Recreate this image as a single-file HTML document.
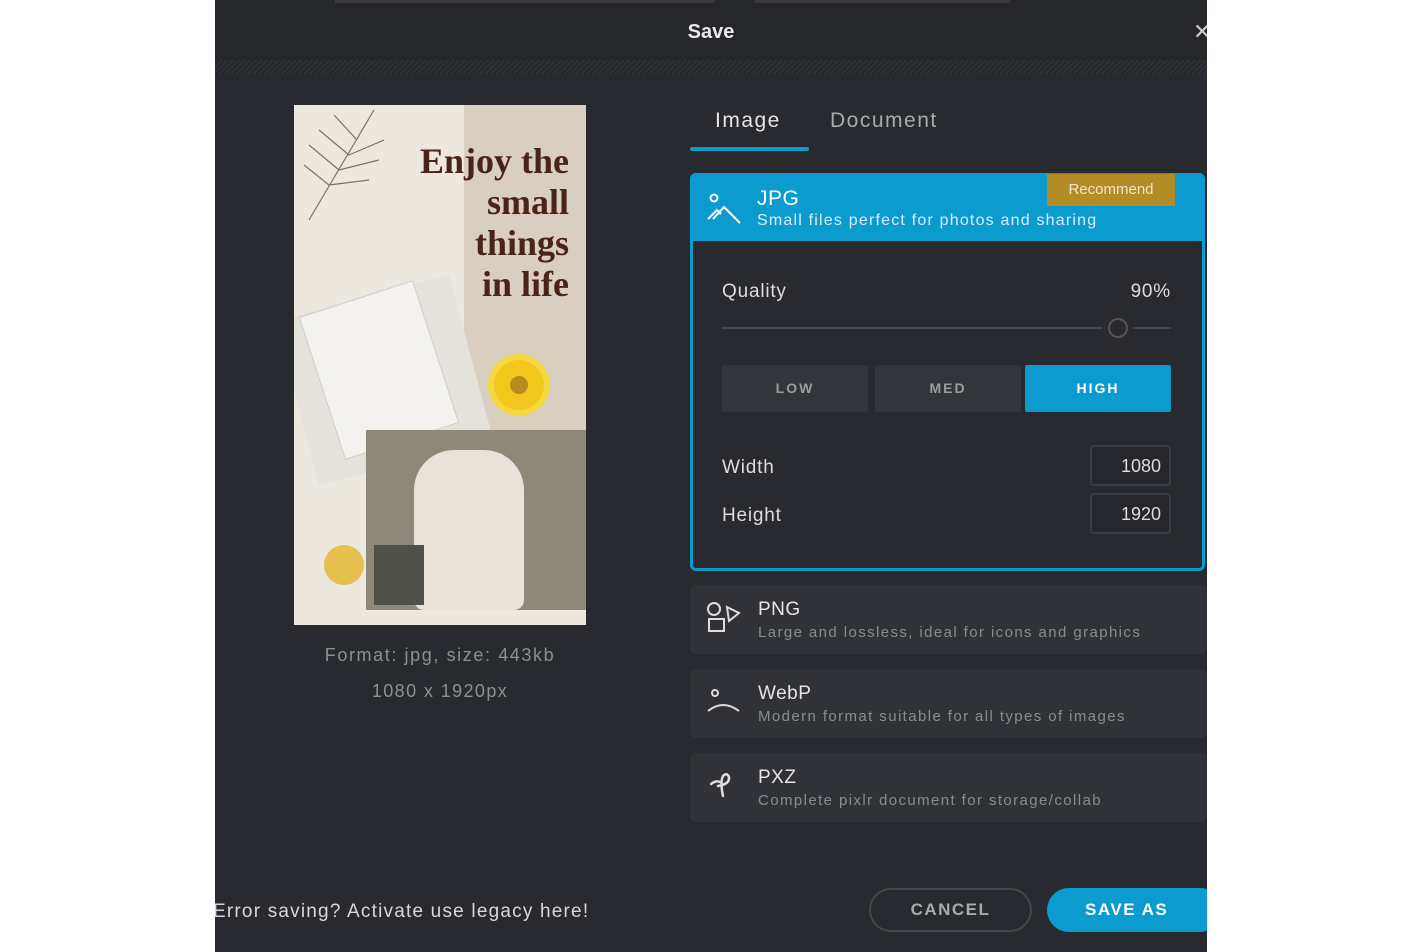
<!DOCTYPE html>
<html><head><meta charset="utf-8"><style>
*{margin:0;padding:0;box-sizing:border-box}
body{width:1428px;height:952px;background:#fff;position:relative;overflow:hidden;font-family:"Liberation Sans",sans-serif;color:#ddd}
.dlg{position:absolute;left:215px;top:0;width:992px;height:952px;background:#282a2f;overflow:hidden}
.hdr{position:absolute;left:0;top:0;width:992px;height:60px;background:#25272b}
.stripe{position:absolute;left:0;top:60px;width:992px;height:14px;background:repeating-linear-gradient(135deg,#2f3136 0 2px,#25272b 2px 4px)}
.abs{position:absolute}
.card{position:absolute;left:475px;width:517px;background:#303237;border-radius:6px}
.card .t{position:absolute;left:68px;font-size:19px;color:#e6e6e6;letter-spacing:.5px}
.card .s{position:absolute;left:68px;font-size:15px;color:#8a8c90;letter-spacing:1.4px}
.btn{position:absolute;top:365px;height:47px;width:146px;background:#33353a;font-size:14px;font-weight:bold;letter-spacing:2px;color:#9a9ca0;text-align:center;line-height:47px;border-radius:2px}
.inp{position:absolute;left:875px;width:81px;height:41px;border:2px solid #3a3c41;border-radius:4px;font-size:18px;color:#ddd;text-align:right;padding-right:8px;line-height:39px;background:#25272c}
.lbl{font-size:19px;color:#ddd;letter-spacing:.8px}
</style></head><body>
<div class="abs" style="left:215px;top:0;width:992px;height:3px;background:#111"></div>
<div class="dlg">
 <div class="hdr"></div>
 <div class="abs" style="left:120px;top:0;width:380px;height:3px;background:#3a3a3a"></div>
 <div class="abs" style="left:540px;top:0;width:255px;height:3px;background:#3a3a3a"></div>
 <div class="abs" style="left:0;top:21px;width:992px;text-align:center;font-size:20px;font-weight:bold;color:#e8e8e8">Save</div>
 <div class="abs" style="left:978px;top:19px;font-size:22px;color:#ccc">✕</div>
 <div class="stripe"></div>

 <!-- preview -->
 <div class="abs" style="left:79px;top:105px;width:292px;height:520px;background:#ece8df;overflow:hidden">
  <div class="abs" style="left:170px;top:0;width:122px;height:330px;background:#d9cfc0"></div>
  <div class="abs" style="left:0;top:190px;width:180px;height:170px;background:#e4e2da;transform:rotate(-15deg)"></div>
  <div class="abs" style="left:25px;top:190px;width:120px;height:150px;background:#f3f2ef;transform:rotate(-18deg);border:1px solid #ccc"></div>
  <div class="abs" style="left:200px;top:255px;width:50px;height:50px;border-radius:50%;background:#f2c81d;box-shadow:0 0 0 6px #f5d740"></div>
  <div class="abs" style="left:216px;top:271px;width:18px;height:18px;border-radius:50%;background:#b98b20"></div>
  <div class="abs" style="left:72px;top:325px;width:220px;height:180px;background:#8d8878"></div>
  <div class="abs" style="left:120px;top:345px;width:110px;height:160px;background:#e8e3d8;border-radius:40px 40px 10px 10px"></div>
  <div class="abs" style="left:80px;top:440px;width:50px;height:60px;background:#50504a"></div>
  <div class="abs" style="left:30px;top:440px;width:40px;height:40px;border-radius:50%;background:#e3b52a;opacity:.8"></div>
  <svg class="abs" style="left:5px;top:0" width="90" height="120"><g stroke="#7a7466" stroke-width="1.2" fill="none"><path d="M10 115 L75 5"/><path d="M30 80 L5 60M40 65 L10 40M50 50 L20 25M58 35 L35 10M30 80 L70 75M40 65 L80 55M50 50 L85 35"/></g></svg>
  <div class="abs" style="left:90px;top:36px;width:185px;text-align:right;font-family:'Liberation Serif',serif;font-weight:bold;font-size:36px;line-height:41px;color:#4a2416">Enjoy the<br>small<br>things<br>in life</div>
 </div>
 <div class="abs" style="left:60px;top:645px;width:330px;text-align:center;font-size:18px;color:#8d8f93;letter-spacing:1.6px">Format: jpg, size: 443kb</div>
 <div class="abs" style="left:60px;top:681px;width:330px;text-align:center;font-size:18px;color:#8d8f93;letter-spacing:1.4px">1080 x 1920px</div>

 <!-- tabs -->
 <div class="abs" style="left:500px;top:109px;font-size:21px;color:#e6e6e6;letter-spacing:1.5px">Image</div>
 <div class="abs" style="left:615px;top:109px;font-size:21px;color:#a8aaae;letter-spacing:1.5px">Document</div>
 <div class="abs" style="left:475px;top:147px;width:119px;height:4px;background:#0b9bcf;border-radius:2px"></div>

 <!-- JPG -->
 <div class="abs" style="left:475px;top:173px;width:515px;height:398px;border:3px solid #0b9bcf;border-radius:6px;background:#282a2f"></div>
 <div class="abs" style="left:475px;top:173px;width:515px;height:68px;background:#0b9bcf;border-radius:6px 6px 0 0"></div>
 <div class="abs" style="left:832px;top:174px;width:128px;height:32px;background:#b38c27;color:#f2e8c8;font-size:15px;text-align:center;line-height:32px">Recommend</div>
 <svg class="abs" style="left:492px;top:192px" width="36" height="34"><g stroke="#fff" stroke-width="2" fill="none"><circle cx="7" cy="6" r="3.5"/><path d="M1 27 L10 18 L14 22 M6 27 L17 15 L33 31"/></g></svg>
 <div class="abs" style="left:542px;top:187px;font-size:21px;color:#fff;letter-spacing:.5px">JPG</div>
 <div class="abs" style="left:542px;top:212px;font-size:16px;color:#d8eef8;letter-spacing:1.2px">Small files perfect for photos and sharing</div>
 <div class="abs lbl" style="left:507px;top:281px">Quality</div>
 <div class="abs lbl" style="left:880px;top:281px;width:76px;text-align:right">90%</div>
 <div class="abs" style="left:507px;top:327px;width:380px;height:2px;background:#44464b"></div>
 <div class="abs" style="left:918px;top:327px;width:38px;height:2px;background:#44464b"></div>
 <div class="abs" style="left:893px;top:318px;width:20px;height:20px;border-radius:50%;border:2px solid #555;background:#282a2f"></div>
 <div class="btn" style="left:507px">LOW</div>
 <div class="btn" style="left:660px">MED</div>
 <div class="btn" style="left:810px;background:#0b9bcf;color:#fff">HIGH</div>
 <div class="abs lbl" style="left:507px;top:457px">Width</div>
 <div class="abs lbl" style="left:507px;top:505px">Height</div>
 <div class="inp" style="top:445px">1080</div>
 <div class="inp" style="top:493px">1920</div>

 <!-- other formats -->
 <div class="card" style="top:585px;height:69px">
  <svg class="abs" style="left:16px;top:16px" width="36" height="36"><g stroke="#ddd" stroke-width="2" fill="none"><circle cx="8" cy="8" r="6"/><path d="M21 6 L33 12 L23 20 Z"/><rect x="3" y="18" width="15" height="12"/></g></svg>
  <div class="t" style="top:14px">PNG</div>
  <div class="s" style="top:39px">Large and lossless, ideal for icons and graphics</div>
 </div>
 <div class="card" style="top:669px;height:69px">
  <svg class="abs" style="left:16px;top:18px" width="36" height="32"><g stroke="#ddd" stroke-width="2" fill="none"><circle cx="9" cy="6" r="3"/><path d="M2 24 Q17 12 33 24"/></g></svg>
  <div class="t" style="top:14px">WebP</div>
  <div class="s" style="top:39px">Modern format suitable for all types of images</div>
 </div>
 <div class="card" style="top:753px;height:69px">
  <svg class="abs" style="left:18px;top:17px" width="30" height="34"><g stroke="#ddd" stroke-width="2.5" fill="none" stroke-linecap="round"><path d="M3 14 Q8 10 12 12 M15 26 Q12 12 15 6 Q19 2 21 7 Q22 14 10 16"/></g></svg>
  <div class="t" style="top:14px">PXZ</div>
  <div class="s" style="top:39px">Complete pixlr document for storage/collab</div>
 </div>

 <!-- footer -->
 <div class="abs" style="left:-2px;top:901px;font-size:19px;color:#d8d8d8;letter-spacing:1.2px">Error saving? Activate use legacy here!</div>
 <div class="abs" style="left:654px;top:888px;width:163px;height:44px;border:2px solid #44464b;border-radius:22px;text-align:center;line-height:40px;font-size:17px;font-weight:bold;letter-spacing:1.5px;color:#a8aaae">CANCEL</div>
 <div class="abs" style="left:832px;top:888px;width:175px;height:44px;background:#0b9bcf;border-radius:22px;line-height:44px;padding-left:38px;font-size:17px;font-weight:bold;letter-spacing:1.5px;color:#fff">SAVE AS</div>
</div>
</body></html>
